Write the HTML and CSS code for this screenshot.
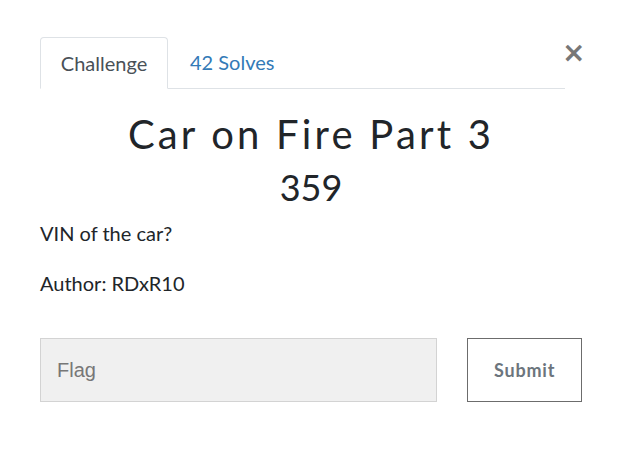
FILE: index.html
```html
<!DOCTYPE html>
<html>
<head>
<meta charset="utf-8">
<link rel="stylesheet" href="styles.css">
</head>
<body>
<div class="modal">
  <button class="close" aria-label="Close">&times;</button>
  <ul class="tabs">
    <li class="tab active">Challenge</li>
    <li class="tab link">42 Solves</li>
  </ul>
  <h2 class="title">Car on Fire Part 3</h2>
  <h3 class="value">359</h3>
  <p class="desc">VIN of the car?</p>
  <p class="desc">Author: RDxR10</p>
  <form class="flag-row">
    <input class="flag" type="text" placeholder="Flag">
    <button class="submit" type="button">Submit</button>
  </form>
</div>
</body>
</html>
```
FILE: styles.css
```css
* { box-sizing: border-box; }
html, body { margin: 0; background: #fff; }
body { font-family: Lato, "Open Sans", sans-serif; color: #212529; }
.modal {
  position: relative;
  width: 622px;
  height: 460px;
  padding: 37px 40px 0 40px;
}
.close {
  position: absolute;
  left: 562px;
  top: 38px;
  border: 0;
  background: none;
  padding: 0;
  font-family: "DejaVu Sans", sans-serif;
  font-size: 28px;
  line-height: 30px;
  color: #777;
  font-weight: bold;
}
.tabs {
  list-style: none;
  margin: 0;
  padding: 0;
  width: 525px;
  display: flex;
  border-bottom: 1px solid #dee2e6;
}
.tab {
  font-size: 20px;
  height: 52px;
  line-height: 51px;
  margin-bottom: -1px;
  padding: 0 20px;
}
.tab.active {
  width: 128px;
  color: #495057;
  border: 1px solid #dee2e6;
  border-bottom-color: #fff;
  border-radius: 4px 4px 0 0;
  text-align: center;
  padding: 0;
}
.tab.link { color: #337ab7; padding-left: 22px; }
.title {
  margin: 23px 0 0 0;
  text-align: center;
  font-weight: 400;
  font-size: 40px;
  line-height: 44px;
  letter-spacing: 3.2px;
}
.value {
  margin: 11px 0 0 0;
  text-align: center;
  font-weight: 400;
  font-size: 36px;
  line-height: 40px;
}
.desc {
  margin: 0;
  font-size: 20px;
  line-height: 24px;
}
.value + .desc { margin-top: 14px; }
.desc + .desc { margin-top: 26px; }
.flag-row {
  margin-top: 43px;
  display: flex;
  gap: 30px;
}
.flag {
  width: 398px;
  height: 64px;
  background: #f0f0f0;
  border: 1px solid #d3d3d3;
  border-radius: 0;
  padding: 0 16px;
  font-family: "Liberation Sans", Arial, sans-serif;
  font-size: 20px;
  color: #495057;
}
.flag::placeholder { color: #777; }
.submit {
  width: 115px;
  height: 64px;
  background: #fff;
  border: 1px solid #6c6c6c;
  border-radius: 0;
  font-family: Lato, sans-serif;
  font-weight: 700;
  font-size: 18px;
  letter-spacing: 0.8px;
  color: #6c757d;
}
```
